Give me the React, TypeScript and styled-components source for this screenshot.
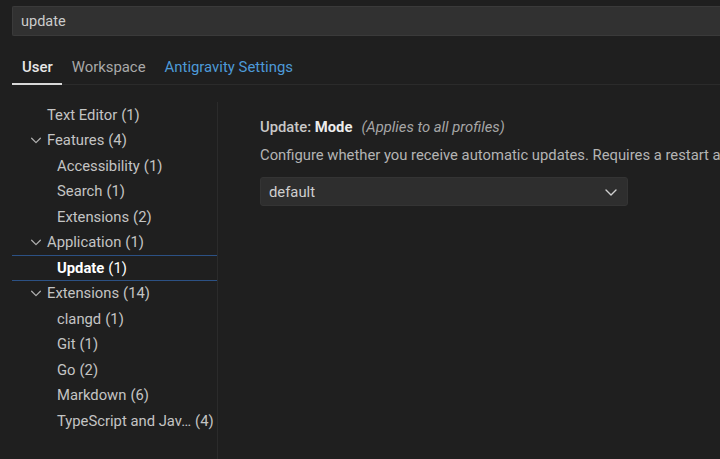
import React from 'react'
import styled, { createGlobalStyle } from 'styled-components'

const GlobalStyle = createGlobalStyle`
  html, body {
    margin: 0;
    padding: 0;
    background: #1f1f1f;
    overflow: hidden;
  }
  body {
    font-family: Roboto, "Noto Sans", sans-serif;
    color: #cccccc;
  }
`

const Page = styled.div({
  width: 720,
  height: 459,
  display: 'flex',
  flexDirection: 'column',
  overflow: 'hidden',
})

const SearchWrap = styled.div({
  padding: '6px 0 0 12px',
})

const SearchBox = styled.div({
  height: 30,
  boxSizing: 'border-box',
  background: '#313131',
  border: '1px solid #3a3a3a',
  borderRight: 'none',
  borderRadius: '2px 0 0 2px',
  display: 'flex',
  alignItems: 'center',
  padding: '0 8px',
  fontSize: 14.5,
  color: '#cccccc',
})

const TabBar = styled.div({
  display: 'flex',
  marginTop: 14,
  marginLeft: 12,
  height: 35,
  borderBottom: '1px solid #2b2b2b',
  boxSizing: 'border-box',
})

const Tab = styled.div<{ $active?: boolean; $link?: boolean }>(p => ({
  padding: '0 9px 0 10px',
  display: 'flex',
  alignItems: 'center',
  paddingBottom: 2,
  fontSize: 14.9,
  fontWeight: p.$active ? 500 : 400,
  color: p.$link ? '#4d9ad8' : p.$active ? '#e7e7e7' : '#a9a9a9',
  boxShadow: p.$active ? 'inset 0 -2px 0 #d8d8d8' : 'none',
  marginBottom: -1,
}))

const Body = styled.div({
  display: 'flex',
  flex: 1,
  marginTop: 17,
})

const Tree = styled.div({
  width: 205,
  marginLeft: 12,
  borderRight: '1px solid #2b2b2b',
})

const Row = styled.div<{ $depth: number; $selected?: boolean }>(p => ({
  height: 25.5,
  display: 'flex',
  alignItems: 'center',
  paddingLeft: p.$depth === 2 ? 45 : 17,
  fontSize: 14.8,
  color: p.$selected ? '#ffffff' : '#c4c4c4',
  boxShadow: p.$selected ? 'inset 0 1px 0 #2c5184, inset 0 -1px 0 #2c5184' : 'none',
  whiteSpace: 'nowrap',
}))

const Twist = styled.span({
  width: 18,
  display: 'flex',
  justifyContent: 'flex-start',
  alignItems: 'center',
})

const Label = styled.span<{ $bold?: boolean }>(p => ({
  fontWeight: p.$bold ? 700 : 400,
}))

const Count = styled.span({
  marginLeft: 4,
})

const Content = styled.div({
  flex: 1,
  padding: '15px 0 0 42px',
  whiteSpace: 'nowrap',
  overflow: 'hidden',
})

const Title = styled.div({
  fontSize: 14.8,
  height: 20,
  display: 'flex',
  alignItems: 'center',
  color: '#c8c8c8',
})

const Category = styled.span({
  fontWeight: 500,
})

const Key = styled.span({
  fontWeight: 700,
  color: '#ececec',
})

const Scope = styled.span({
  fontStyle: 'italic',
  color: '#a6a6a6',
  marginLeft: 9,
})

const Description = styled.div({
  marginTop: 9,
  fontSize: 14.8,
  color: '#b4b4b4',
})

const Select = styled.div({
  marginTop: 13,
  width: 368,
  height: 29,
  boxSizing: 'border-box',
  background: '#2e2e2e',
  border: '1px solid #343434',
  borderRadius: 3,
  display: 'flex',
  alignItems: 'center',
  justifyContent: 'space-between',
  padding: '0 8px 0 8px',
  fontSize: 14.8,
  color: '#cfcfcf',
})

const Chevron = ({ size = 12, color = '#c4c4c4' }: { size?: number; color?: string }) => (
  <svg width={size} height={size} viewBox="0 0 16 16" fill="none">
    <path d="M3 6l5 5 5-5" stroke={color} strokeWidth="1.4" strokeLinecap="round" strokeLinejoin="round" />
  </svg>
)

type Item = { label: string; count: number; depth: number; open?: boolean; selected?: boolean }

const items: Item[] = [
  { label: 'Text Editor', count: 1, depth: 1 },
  { label: 'Features', count: 4, depth: 1, open: true },
  { label: 'Accessibility', count: 1, depth: 2 },
  { label: 'Search', count: 1, depth: 2 },
  { label: 'Extensions', count: 2, depth: 2 },
  { label: 'Application', count: 1, depth: 1, open: true },
  { label: 'Update', count: 1, depth: 2, selected: true },
  { label: 'Extensions', count: 14, depth: 1, open: true },
  { label: 'clangd', count: 1, depth: 2 },
  { label: 'Git', count: 1, depth: 2 },
  { label: 'Go', count: 2, depth: 2 },
  { label: 'Markdown', count: 6, depth: 2 },
  { label: 'TypeScript and Jav...', count: 4, depth: 2 },
]

const App = () => (
  <Page>
    <GlobalStyle />
    <SearchWrap>
      <SearchBox>update</SearchBox>
    </SearchWrap>
    <TabBar>
      <Tab $active>User</Tab>
      <Tab>Workspace</Tab>
      <Tab $link>Antigravity Settings</Tab>
    </TabBar>
    <Body>
      <Tree>
        {items.map((it, i) => (
          <Row key={i} $depth={it.depth} $selected={it.selected}>
            {it.depth === 1 && (
              <Twist>{it.open && <Chevron size={14} color="#b0b0b0" />}</Twist>
            )}
            <Label $bold={it.selected}>{it.label.replace('...', '\u2026')}</Label>
            <Count>({it.count})</Count>
          </Row>
        ))}
      </Tree>
      <Content>
        <Title>
          <Category>Update: </Category>&nbsp;<Key>Mode</Key>
          <Scope>(Applies to all profiles)</Scope>
        </Title>
        <Description>
          Configure whether you receive automatic updates. Requires a restart after change. The updates are fetched from a Microsoft online service.
        </Description>
        <Select>
          default
          <Chevron size={16} color="#cfcfcf" />
        </Select>
      </Content>
    </Body>
  </Page>
)

export default App
